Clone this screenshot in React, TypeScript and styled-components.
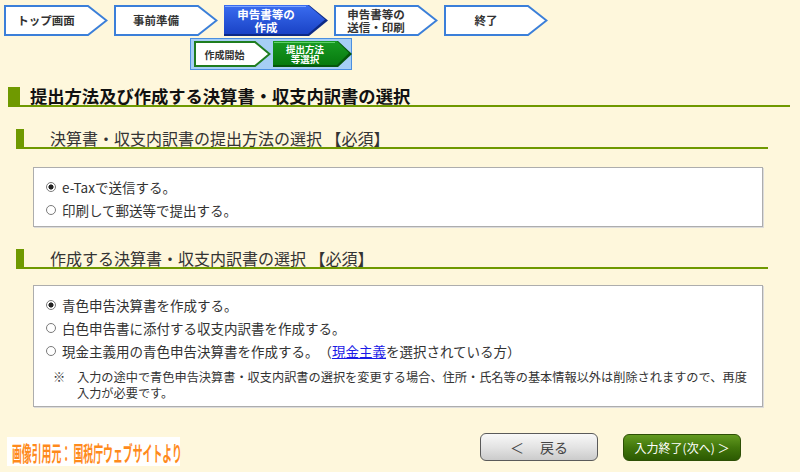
import React from 'react';
import styled, { createGlobalStyle } from 'styled-components';

const GlobalStyle = createGlobalStyle`
  html, body { margin: 0; padding: 0; background: #fef7dc; }
  body { font-family: "Noto Sans CJK JP", "Noto Sans", sans-serif; color: #333; }
`;

const Page = styled.div`
  width: 800px;
  height: 472px;
  overflow: hidden;
  background: #fef7dc;
  padding-top: 5px;
  box-sizing: border-box;
`;

const StepRow = styled.div`
  display: flex;
  gap: 6px;
  padding-left: 4px;
`;

const StepBox = styled.div<{ $w: number; $h: number }>`
  position: relative;
  flex: none;
  width: ${(p) => p.$w}px;
  height: ${(p) => p.$h}px;
`;

const StepSvg = styled.svg`
  position: absolute;
  left: 0;
  top: 0;
`;

const StepLabel = styled.div<{ $rw: number; $active?: boolean; $size: number }>`
  position: relative;
  width: ${(p) => p.$rw}px;
  height: 100%;
  display: flex;
  align-items: center;
  justify-content: center;
  font-size: ${(p) => p.$size}px;
  line-height: 1.1;
  font-weight: 700;
  color: ${(p) => (p.$active ? '#fff' : '#333')};
  text-align: center;
  white-space: nowrap;
`;

type Tone = 'plain' | 'blue' | 'greenOutline' | 'green';

function Step({ w, h, rw, tone, lines, size }: { w: number; h: number; rw: number; tone: Tone; lines: string[]; size: number }) {
  const mid = h / 2;
  let shape: React.ReactNode;
  if (tone === 'plain' || tone === 'greenOutline') {
    const stroke = tone === 'plain' ? '#3b7fd9' : '#1f7d1f';
    shape = (
      <polygon
        points={`1,1 ${rw},1 ${w - 1.5},${mid} ${rw},${h - 1} 1,${h - 1}`}
        fill="#fff"
        stroke={stroke}
        strokeWidth={2}
      />
    );
  } else {
    const blue = tone === 'blue';
    const dark = blue ? '#0d2a86' : '#05560a';
    const top = blue ? '#3a6cf0' : '#189b22';
    const bot = blue ? '#1a43c6' : '#077a0f';
    const hi = blue ? '#7ea6ff' : '#5fd06a';
    const gid = blue ? 'gBlue' : 'gGreen';
    shape = (
      <>
        <defs>
          <linearGradient id={gid} x1="0" y1="0" x2="0" y2="1">
            <stop offset="0" stopColor={top} />
            <stop offset="1" stopColor={bot} />
          </linearGradient>
        </defs>
        <polygon points={`0,0 ${rw + 1},0 ${w},${mid} ${rw + 1},${h} 0,${h}`} fill={dark} />
        <polygon points={`0,0 ${rw},0 ${w - 3},${mid - 1} ${rw},${h - 2} 0,${h - 2}`} fill={`url(#${gid})`} />
        <line x1="1" y1="1.5" x2={rw - 2} y2="1.5" stroke={hi} strokeWidth={1} />
      </>
    );
  }
  return (
    <StepBox $w={w} $h={h}>
      <StepSvg width={w} height={h} viewBox={`0 0 ${w} ${h}`}>
        {shape}
      </StepSvg>
      <StepLabel $rw={rw} $active={tone === 'blue' || tone === 'green'} $size={size}>
        <span>
          {lines.map((l, i) => (
            <React.Fragment key={l}>
              {i > 0 && <br />}
              {l}
            </React.Fragment>
          ))}
        </span>
      </StepLabel>
    </StepBox>
  );
}

const SubRow = styled.div`
  margin: 2px 0 0 190px;
  width: 162px;
  height: 32px;
  box-sizing: border-box;
  background: #a6cef5;
  border: 1px solid #4b8fe0;
  display: flex;
  align-items: center;
  padding-left: 3px;
  gap: 2px;
`;

const Heading = styled.div<{ $top: number; $left: number; $width: number; $level: 1 | 2 }>`
  margin: ${(p) => p.$top}px 0 0 ${(p) => p.$left}px;
  width: ${(p) => p.$width}px;
  height: 18px;
  display: flex;
  align-items: center;
  border-bottom: 2px solid #6f9900;
  font-size: ${(p) => (p.$level === 1 ? '17.3px' : '16px')};
  font-weight: ${(p) => (p.$level === 1 ? 700 : 400)};
  color: ${(p) => (p.$level === 1 ? '#111' : '#333')};
  white-space: nowrap;
`;

const Bar = styled.span<{ $w: number }>`
  flex: none;
  width: ${(p) => p.$w}px;
  align-self: stretch;
  background: #6f9900;
`;

const HeadingText = styled.span<{ $gap: number }>`
  margin-left: ${(p) => p.$gap}px;
  line-height: 18px;
`;

const Box = styled.div<{ $top: number }>`
  margin: ${(p) => p.$top}px 0 0 33px;
  width: 730px;
  box-sizing: border-box;
  background: #fff;
  border: 1px solid #adadad;
  box-shadow: 1px 1px 0 #dcdcdc;
  padding: 7px 12px 5px;
`;

const Option = styled.div`
  display: flex;
  align-items: center;
  gap: 6px;
  height: 23px;
  font-size: 13.5px;
  color: #333;
  white-space: nowrap;
`;

const Radio = styled.span<{ $checked?: boolean }>`
  flex: none;
  width: 10px;
  height: 10px;
  box-sizing: border-box;
  border-radius: 50%;
  border: 1px solid #7a7a7a;
  background: ${(p) =>
    p.$checked ? 'radial-gradient(circle, #222 0 2.3px, #fff 2.8px)' : '#fff'};
`;

const Link = styled.a`
  color: #1a1ae6;
  text-decoration: underline;
`;

const Note = styled.div`
  display: grid;
  grid-template-columns: 24px auto;
  margin: 7px 0 0 7px;
  font-size: 12.2px;
  line-height: 16px;
  color: #333;
`;

const NoteLine = styled.div`
  white-space: nowrap;
`;

const BottomRow = styled.div`
  display: flex;
  align-items: flex-start;
  margin-top: 26px;
  padding: 0 59px 0 7px;
`;

const Credit = styled.div`
  flex: none;
  margin-top: 4px;
  width: 173px;
  height: 29px;
  box-sizing: border-box;
  background: #fff;
  display: flex;
  align-items: center;
  padding-left: 5px;
`;

const CreditText = styled.span`
  flex: none;
  display: inline-block;
  width: 163px;
  white-space: nowrap;
  font-size: 21px;
  line-height: 24px;
  font-weight: 700;
  color: #ff8a1c;
  transform: scale(0.47, 1);
  transform-origin: left center;
`;

const Buttons = styled.div`
  margin-left: auto;
  display: flex;
  gap: 25px;
`;

const BackButton = styled.button`
  width: 118px;
  height: 28px;
  box-sizing: border-box;
  border: 1.5px solid #5a5a5a;
  border-radius: 6px;
  background: linear-gradient(#f8f8f8, #e4e4e4 50%, #cbcbcb);
  font-family: inherit;
  font-size: 14px;
  color: #444;
  display: flex;
  align-items: center;
  justify-content: center;
  gap: 16px;
  padding: 0;
`;

const NextButton = styled.button`
  margin-top: 1px;
  width: 118px;
  height: 27px;
  box-sizing: border-box;
  border: 1px solid #2d4f05;
  border-radius: 6px;
  background: linear-gradient(#639a20, #41760b 50%, #2c5a02);
  font-family: inherit;
  font-size: 12px;
  color: #fff;
  display: flex;
  align-items: center;
  justify-content: center;
  padding: 0;
  white-space: nowrap;
`;

export default function App() {
  return (
    <Page>
      <GlobalStyle />
      <StepRow>
        <Step w={104} h={31} rw={84} tone="plain" lines={['トップ画面']} size={11.5} />
        <Step w={104} h={31} rw={84} tone="plain" lines={['事前準備']} size={11.5} />
        <Step w={104} h={31} rw={84} tone="blue" lines={['申告書等の', '作成']} size={11.5} />
        <Step w={104} h={31} rw={84} tone="plain" lines={['申告書等の', '送信・印刷']} size={11.5} />
        <Step w={104} h={31} rw={84} tone="plain" lines={['終了']} size={11.5} />
      </StepRow>
      <SubRow>
        <Step w={77} h={26} rw={61} tone="greenOutline" lines={['作成開始']} size={10} />
        <Step w={79} h={26} rw={64} tone="green" lines={['提出方法', '等選択']} size={9.5} />
      </SubRow>

      <Heading $top={17} $left={8} $width={782} $level={1}>
        <Bar $w={12} />
        <HeadingText $gap={10}>提出方法及び作成する決算書・収支内訳書の選択</HeadingText>
      </Heading>

      <Heading $top={22} $left={16} $width={752} $level={2}>
        <Bar $w={8} />
        <HeadingText $gap={26}>決算書・収支内訳書の提出方法の選択 【必須】</HeadingText>
      </Heading>

      <Box $top={18}>
        <Option>
          <Radio $checked />
          <span>e-Taxで送信する。</span>
        </Option>
        <Option>
          <Radio />
          <span>印刷して郵送等で提出する。</span>
        </Option>
      </Box>

      <Heading $top={22} $left={16} $width={752} $level={2}>
        <Bar $w={8} />
        <HeadingText $gap={26}>作成する決算書・収支内訳書の選択 【必須】</HeadingText>
      </Heading>

      <Box $top={16}>
        <Option>
          <Radio $checked />
          <span>青色申告決算書を作成する。</span>
        </Option>
        <Option>
          <Radio />
          <span>白色申告書に添付する収支内訳書を作成する。</span>
        </Option>
        <Option>
          <Radio />
          <span>
            現金主義用の青色申告決算書を作成する。　（<Link href="#">現金主義</Link>を選択されている方）
          </span>
        </Option>
        <Note>
          <span>※</span>
          <div>
            <NoteLine>
              入力の途中で青色申告決算書・収支内訳書の選択を変更する場合、住所・氏名等の基本情報以外は削除されますので、再度
            </NoteLine>
            <NoteLine>入力が必要です。</NoteLine>
          </div>
        </Note>
      </Box>

      <BottomRow>
        <Credit>
          <CreditText>画像引用元： 国税庁ウェブサイトより</CreditText>
        </Credit>
        <Buttons>
          <BackButton>
            <span>＜</span>
            <span>戻る</span>
          </BackButton>
          <NextButton>入力終了(次へ) ＞</NextButton>
        </Buttons>
      </BottomRow>
    </Page>
  );
}
